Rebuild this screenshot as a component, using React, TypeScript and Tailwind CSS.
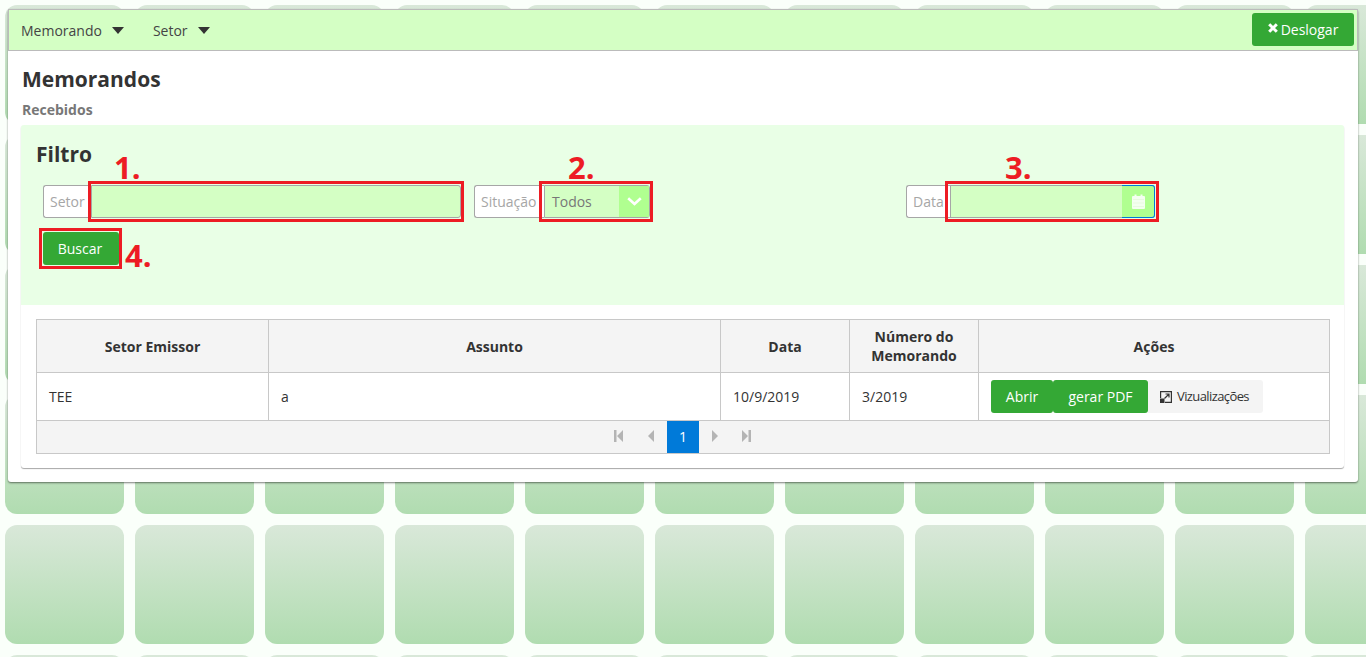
const tiles = Array.from({ length: 66 }, (_, i) => i);

const columns = [
    { titulo: 'Setor Emissor', classe: 'w-[232px]' },
    { titulo: 'Assunto', classe: 'w-[452px]' },
    { titulo: 'Data', classe: 'w-[129px]' },
    { titulo: 'Número do Memorando', classe: 'w-[129px]' },
    { titulo: 'Ações', classe: '' },
];

const Caret = () => (
    <svg width="12" height="7" viewBox="0 0 12 7" className="fill-[#333]">
        <path d="M0 0h12L6 7z" />
    </svg>
);

const PageIcon = ({ d }: { d: string }) => (
    <svg width="10" height="12" viewBox="0 0 10 12" className="mb-[2px] fill-[#b4b4b4]">
        <path d={d} />
    </svg>
);

const Addon = ({ children, className }: { children: string; className: string }) => (
    <span className={`flex h-[33px] items-center rounded-l-[3px] border border-r-0 border-[#a6a6a6] bg-white pl-[6px] text-sm text-[#a6a6a6] ${className}`}>
        {children}
    </span>
);

const Annotation = ({ children, className }: { children: string; className: string }) => (
    <span className={`absolute text-[31px] leading-none font-bold text-[#ed1c24] ${className}`}>{children}</span>
);

const Box = ({ className }: { className: string }) => (
    <span className={`absolute border-[3px] border-[#ed1c24] ${className}`} />
);

export default function App() {
    return (
        <div className="relative h-[657px] w-full overflow-hidden bg-[#fafffa] font-['Open_Sans',sans-serif]">
            <div className="absolute inset-0 grid grid-cols-[repeat(11,119px)] auto-rows-[119px] gap-[11px] p-[5px]">
                {tiles.map((i) => (
                    <div key={i} className="rounded-xl bg-gradient-to-b from-[#d9e8d9] to-[#b0dcb0]" />
                ))}
            </div>

            <div className="relative mt-[9px] ml-2 w-[1350px] rounded-[3px] bg-white pb-[14px] shadow-[0_1px_2px_rgba(0,0,0,0.5)]">
                <nav className="flex h-[42px] items-center border border-[#bbbbbb] bg-[#d4ffc4] pr-[3px] pl-3 text-sm text-[#444444]">
                    <span className="pt-[2px]">Memorando</span>
                    <span className="mr-[29px] ml-[10px]"><Caret /></span>
                    <span className="pt-[2px]">Setor</span>
                    <span className="ml-[10px]"><Caret /></span>
                    <button className="mb-[1px] ml-auto flex h-[33px] w-[102px] items-center justify-center gap-[3px] rounded-[3px] bg-[#34a835] text-sm text-white">
                        <svg width="10" height="10" viewBox="0 0 10 10" stroke="white" strokeWidth="3" className="mb-[3px]">
                            <path d="M1.2 1.2L8.8 8.8M8.8 1.2L1.2 8.8" />
                        </svg>
                        Deslogar
                    </button>
                </nav>

                <h1 className="mt-[15px] ml-[14px] text-[21px] leading-[27px] font-bold text-[#333333]">Memorandos</h1>
                <h2 className="mt-[7px] ml-[14px] text-sm leading-[19px] font-bold text-[#777777]">Recebidos</h2>

                <section className="mt-[6px] mr-[14px] ml-[13px] rounded-[3px] bg-white shadow-[0_1px_1px_rgba(0,0,0,0.35)]">
                    <div className="h-[180px] rounded-t-[3px] bg-[#e9ffe6] pt-4 pl-[15px]">
                        <h3 className="text-[21px] leading-[27px] font-bold text-[#333333]">Filtro</h3>
                        <div className="mt-[17px] ml-[7px] flex">
                            <div className="flex w-[418px]">
                                <Addon className="w-[48px]">Setor</Addon>
                                <span className="h-[33px] flex-1 rounded-r-[3px] border border-[#a6a6a6] bg-[#d4ffc4]" />
                            </div>
                            <div className="ml-[13px] flex w-[176px]">
                                <Addon className="w-[70px]">Situação</Addon>
                                <div className="flex h-[33px] flex-1 items-center rounded-r-[3px] border border-[#a6a6a6] bg-[#d4ffc4] pl-[7px] text-sm text-[#777777]">
                                    Todos
                                    <span className="ml-auto flex h-full w-[30px] items-center justify-center bg-[#b0ff90]">
                                        <svg width="15" height="9" viewBox="0 0 15 9" fill="none" stroke="white" strokeWidth="2.6">
                                            <path d="M1.2 1.2L7.5 7L13.8 1.2" />
                                        </svg>
                                    </span>
                                </div>
                            </div>
                            <div className="ml-[256px] flex w-[249px]">
                                <Addon className="w-[44px]">Data</Addon>
                                <div className="flex h-[33px] flex-1 justify-end rounded-r-[3px] border-y border-l border-[#a6a6a6] bg-[#d4ffc4]">
                                    <span className="-my-px flex w-[33px] items-center justify-center rounded-r-[3px] border-y border-r border-[#007ad9] bg-[#b0ff90]">
                                        <svg width="13" height="15" viewBox="0 0 13 15" fill="#f4fff0">
                                            <path d="M0 3a1 1 0 0 1 1-1h1.5V.5h2V2h4V.5h2V2H12a1 1 0 0 1 1 1v11a1 1 0 0 1-1 1H1a1 1 0 0 1-1-1z" />
                                            <path d="M1 5.5h11M1 9h11M1 12.5h11" stroke="#dcf5d0" strokeWidth="0.5" />
                                        </svg>
                                    </span>
                                </div>
                            </div>
                        </div>
                        <button className="mt-[14px] ml-[7px] h-[33px] w-[76px] rounded-[3px] bg-[#34a835] pr-[2px] text-sm text-white">Buscar</button>
                    </div>

                    <div className="px-[15px] pt-[14px] pb-[14px]">
                        <table className="w-[1294px] table-fixed border-collapse text-sm text-[#333333]">
                            <thead>
                                <tr className="h-[53px] bg-[#f4f4f4]">
                                    {columns.map((col) => (
                                        <th key={col.titulo} className={`border border-[#c8c8c8] px-3 text-center leading-[19px] font-bold ${col.classe}`}>
                                            {col.titulo}
                                        </th>
                                    ))}
                                </tr>
                            </thead>
                            <tbody>
                                <tr className="h-[48px]">
                                    <td className="border border-[#c8c8c8] px-3">TEE</td>
                                    <td className="border border-[#c8c8c8] px-3">a</td>
                                    <td className="border border-[#c8c8c8] px-3">10/9/2019</td>
                                    <td className="border border-[#c8c8c8] px-3">3/2019</td>
                                    <td className="border border-[#c8c8c8] px-3">
                                        <div className="flex">
                                            <button className="h-[33px] w-[62px] rounded-[3px] bg-[#34a835] text-white">Abrir</button>
                                            <button className="h-[33px] w-[95px] rounded-[3px] bg-[#34a835] text-white">gerar PDF</button>
                                            <button className="flex h-[33px] w-[115px] items-center gap-[5px] rounded-r-[3px] bg-[#f4f4f4] pl-3 text-[13px] tracking-[-0.6px] text-[#333333]">
                                                <svg width="12" height="12" viewBox="0 0 12 12" fill="none" stroke="#333333" strokeWidth="1.2">
                                                    <path d="M0.6 7V0.6H11.4V11.4H5" />
                                                    <path d="M4.5 7.5L9 3M5.5 3H9V6.5" />
                                                    <rect x="0" y="7.5" width="4.5" height="4.5" fill="#333333" stroke="none" />
                                                </svg>
                                                Vizualizações
                                            </button>
                                        </div>
                                    </td>
                                </tr>
                                <tr className="h-[33px] bg-[#f4f4f4]">
                                    <td colSpan={5} className="border border-[#c8c8c8] p-0">
                                        <div className="flex h-[32px] items-center justify-center">
                                            <span className="flex w-[32px] justify-center"><PageIcon d="M0 0h2.5v12H0zM9 0v12L3 6z" /></span>
                                            <span className="flex w-[32px] justify-center"><PageIcon d="M8 0v12L2 6z" /></span>
                                            <span className="flex h-[32px] w-[32px] items-center justify-center bg-[#007ad9] text-white">1</span>
                                            <span className="flex w-[32px] justify-center"><PageIcon d="M2 0v12l6-6z" /></span>
                                            <span className="flex w-[32px] justify-center"><PageIcon d="M6.5 0H9v12H6.5zM0 0v12l6-6z" /></span>
                                        </div>
                                    </td>
                                </tr>
                            </tbody>
                        </table>
                    </div>
                </section>
            </div>

            <Box className="top-[181px] left-[88px] h-[41px] w-[376px]" />
            <Box className="top-[181px] left-[539px] h-[41px] w-[114px]" />
            <Box className="top-[181px] left-[945px] h-[41px] w-[214px]" />
            <Box className="top-[228px] left-[39px] h-[41px] w-[83px]" />
            <Annotation className="top-[152px] left-[114px]">1.</Annotation>
            <Annotation className="top-[152px] left-[568px]">2.</Annotation>
            <Annotation className="top-[152px] left-[1005px]">3.</Annotation>
            <Annotation className="top-[240px] left-[125px]">4.</Annotation>
        </div>
    );
}
